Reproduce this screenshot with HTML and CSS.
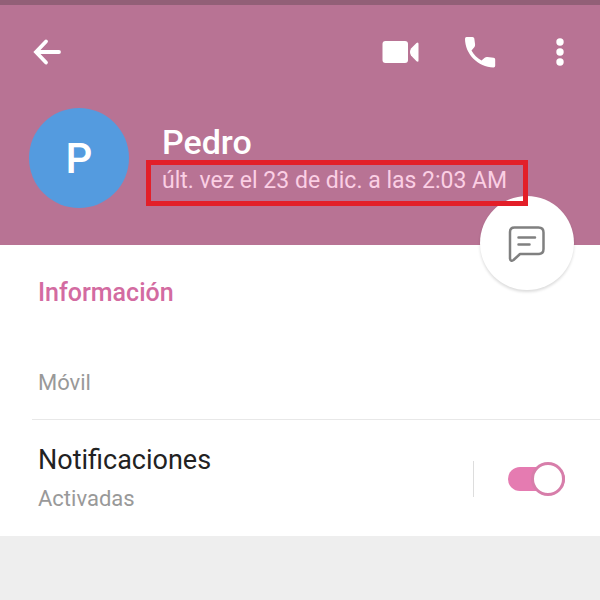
FILE: index.html
```html
<!DOCTYPE html>
<html lang="es">
<head>
<meta charset="utf-8">
<meta name="viewport" content="width=device-width, initial-scale=1">
<title>Pedro</title>
<link rel="stylesheet" href="styles.css">
</head>
<body>
<header class="header">
  <nav class="toolbar">
    <button class="icon-button back" aria-label="Atrás">
      <svg width="40" height="40" viewBox="0 0 40 40" fill="none" stroke="currentColor" stroke-width="3.800" stroke-linecap="round"><path d="M34 20H12M21 9.500 11 20l10 10.500"/></svg>
    </button>
    <button class="icon-button" aria-label="Videollamada">
      <svg width="40" height="40" viewBox="0 0 40 40" fill="currentColor"><rect x="2.500" y="9" width="25.500" height="22" rx="3"/><path d="M31 16.500 36.500 11q2-1.500 2 1v16.500q0 2-2 .8L31 23.500q-2-3.500 0-7z"/></svg>
    </button>
    <button class="icon-button" aria-label="Llamar">
      <svg width="40" height="40" viewBox="0 0 40 40" fill="currentColor"><path d="M6.500 5h6q1.600 0 1.800 1.600l.8 6q.2 1.500-.8 2.700L11.500 18.500C13.800 22.800 17.200 26.300 21.500 28.500l3.200-2.700q1.200-1 2.700-.8l6.200.8q1.600.2 1.600 1.800v6.200q0 1.700-1.700 1.700C18 35 5 22 5 6.700Q5 5 6.500 5z"/></svg>
    </button>
    <button class="icon-button" aria-label="Más opciones">
      <svg width="40" height="40" viewBox="0 0 40 40" fill="currentColor"><circle cx="20" cy="10" r="3.700"/><circle cx="20" cy="20" r="3.700"/><circle cx="20" cy="30" r="3.700"/></svg>
    </button>
  </nav>
  <div class="profile">
    <div class="avatar">P</div>
    <div class="identity">
      <h1 class="name">Pedro</h1>
      <p class="last-seen">últ. vez el 23 de dic. a las 2:03 AM</p>
    </div>
  </div>
  <button class="message" aria-label="Enviar mensaje">
    <svg width="40" height="40" viewBox="0 0 40 40" fill="none" stroke="currentColor" stroke-width="2.500" stroke-linecap="round" stroke-linejoin="round"><path d="M7.500 4.500h24q5 0 5 5v16.500q0 5-5 5H13L6.500 37q-3 2-3.500-1.500V9q0-4.500 4.500-4.500z"/><path d="M11.500 14.500h16.500M11.500 21.500h11"/></svg>
  </button>
</header>
<main class="content">
  <section class="info">
    <h2 class="section-title">Información</h2>
    <p class="caption">Móvil</p>
  </section>
  <section class="notifications">
    <div class="notification-text">
      <label class="setting" for="notify">Notificaciones</label>
      <p class="caption">Activadas</p>
    </div>
    <div class="toggle-area">
      <input class="toggle" type="checkbox" role="switch" id="notify" checked>
    </div>
  </section>
</main>
</body>
</html>
```
FILE: styles.css
```css
* {
  box-sizing: border-box;
}

body {
  margin: 0;
  background: #eee;
  font-family: Roboto, "Liberation Sans", sans-serif;
}

h1, h2, p {
  margin: 0;
}

button {
  border: 0;
  padding: 0;
  cursor: pointer;
}

.header {
  position: relative;
  border-top: 5px solid #925f77;
  padding-bottom: 37px;
  background: #b87394;
  color: #fff;
}

.toolbar {
  display: flex;
  gap: 40px;
  padding: 27px 20px 0 25px;
}

.icon-button {
  display: flex;
  background: none;
  color: #fff;
}

.back {
  margin-right: auto;
}

.profile {
  display: flex;
  gap: 17px;
  padding: 36px 24px 0 29px;
}

.avatar {
  display: flex;
  align-items: center;
  justify-content: center;
  flex: none;
  width: 100px;
  height: 100px;
  border-radius: 50%;
  background: #549bdf;
  font-size: 42px;
  font-weight: 500;
}

.identity {
  padding-top: 16px;
}

.name {
  padding-left: 16px;
  font-size: 34px;
  font-weight: 500;
  line-height: 36px;
}

.last-seen {
  position: relative;
  z-index: 2;
  border: 5px solid #e31f29;
  padding: 0 16px 4px 11px;
  color: #fbcfe4;
  font-size: 23px;
  line-height: 32px;
}

.message {
  position: absolute;
  right: 26px;
  bottom: -45px;
  z-index: 1;
  display: flex;
  align-items: center;
  justify-content: center;
  width: 94px;
  height: 94px;
  border-radius: 50%;
  background: #fff;
  box-shadow: 0 2px 3px rgba(0, 0, 0, 0.14);
  color: #808080;
}

.content {
  background: #fff;
}

.info {
  padding: 32px 38px 22px;
}

.section-title {
  margin-bottom: 60px;
  color: #d36ba1;
  font-size: 25px;
  font-weight: 500;
  line-height: 32px;
}

.caption {
  color: #999;
  font-size: 22px;
  line-height: 28px;
}

.notifications {
  display: flex;
  align-items: center;
  justify-content: space-between;
  margin-left: 32px;
  border-top: 1px solid #e8e8e8;
  padding: 24px 35px 23px 6px;
}

.notification-text {
  display: grid;
  gap: 9px;
}

.setting {
  color: #222;
  font-size: 27px;
  line-height: 32px;
}

.toggle-area {
  display: flex;
  align-items: center;
  height: 36px;
  border-left: 1px solid #ddd;
  padding-left: 34px;
}

.toggle {
  appearance: none;
  position: relative;
  width: 57px;
  height: 24px;
  margin: 0;
  border-radius: 12px;
  background: #e57bb1;
}

.toggle::after {
  content: "";
  position: absolute;
  top: -5px;
  right: 0;
  box-sizing: border-box;
  width: 34px;
  height: 34px;
  border: 3px solid #d77eaa;
  border-radius: 50%;
  background: #fff;
}

.toggle:not(:checked) {
  background: #bbb;
}

.toggle:not(:checked)::after {
  right: 23px;
  border-color: #bbb;
}
```
